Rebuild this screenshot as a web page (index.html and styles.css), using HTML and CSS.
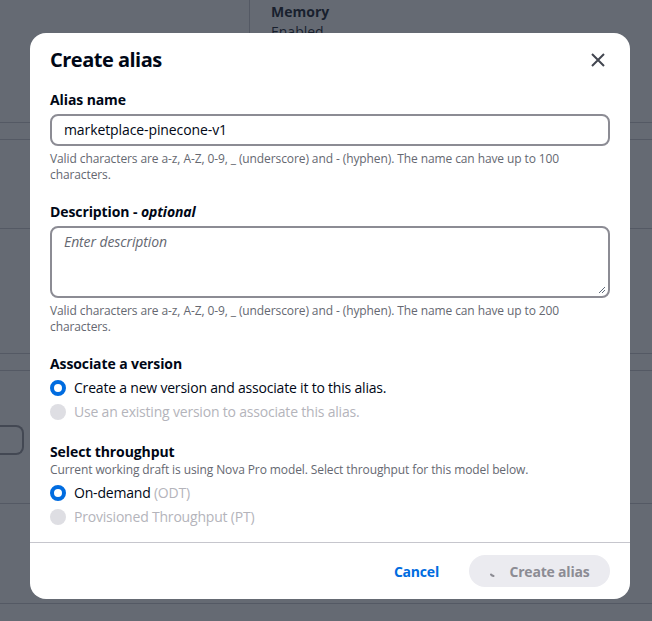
FILE: index.html
```html
<!DOCTYPE html>
<html>
<head>
<meta charset="utf-8">
<link rel="stylesheet" href="styles.css">
</head>
<body>
<div class="page">
  <div class="top">
    <div class="top-left"></div>
    <div class="top-right">
      <div class="kv-key">Memory</div>
      <div class="kv-val">Enabled</div>
    </div>
  </div>
  <div class="row h17"></div>
  <div class="row h89"></div>
  <div class="row h125"></div>
  <div class="row h17"></div>
  <div class="row h133">
    <div class="ghost-input"></div>
  </div>
  <div class="row h100"></div>
</div>
<div class="overlay"></div>
<div class="modal">
  <div class="modal-header">
    <h2 class="title">Create alias</h2>
    <svg class="close" width="16" height="16" viewBox="0 0 16 16"><path d="M2 2l12 12M14 2L2 14" stroke="#424650" stroke-width="2" fill="none"/></svg>
  </div>
  <div class="modal-body">
    <div class="field">
      <div class="label">Alias name</div>
      <div class="input">marketplace-pinecone-v1</div>
      <div class="help">Valid characters are a-z, A-Z, 0-9, _ (underscore) and - (hyphen). The name can have up to 100 characters.</div>
    </div>
    <div class="field">
      <div class="label">Description - <i>optional</i></div>
      <div class="textarea"><span class="placeholder">Enter description</span>
        <svg class="grip" width="8" height="8" viewBox="0 0 8 8"><path d="M7 1L1 7M7 4L4 7" stroke="#5f6b7a" stroke-width="1" fill="none"/></svg>
      </div>
      <div class="help">Valid characters are a-z, A-Z, 0-9, _ (underscore) and - (hyphen). The name can have up to 200 characters.</div>
    </div>
    <div class="field">
      <div class="label">Associate a version</div>
      <div class="radios">
        <div class="radio"><span class="dot on"></span><span>Create a new version and associate it to this alias.</span></div>
        <div class="radio disabled"><span class="dot off"></span><span>Use an existing version to associate this alias.</span></div>
      </div>
    </div>
    <div class="field last">
      <div class="label tight">Select throughput</div>
      <div class="desc">Current working draft is using Nova Pro model. Select throughput for this model below.</div>
      <div class="radios">
        <div class="radio"><span class="dot on"></span><span>On-demand <span class="muted">(ODT)</span></span></div>
        <div class="radio disabled"><span class="dot off"></span><span>Provisioned Throughput (PT)</span></div>
      </div>
    </div>
  </div>
  <div class="modal-footer">
    <button class="link-btn">Cancel</button>
    <button class="primary-btn"><svg class="spin" width="12" height="12" viewBox="0 0 12 12"><path d="M2 9.5a5 5 0 0 0 2.5 1.5" stroke="#8c8c94" stroke-width="2" fill="none" stroke-linecap="round"/></svg>Create alias</button>
  </div>
</div>
</body>
</html>
```
FILE: styles.css
```css
* { box-sizing: border-box; }
html, body { margin: 0; padding: 0; }
body {
  width: 652px;
  height: 621px;
  overflow: hidden;
  position: relative;
  font-family: "Open Sans", "Noto Sans", sans-serif;
  background: #ffffff;
}
.page { width: 652px; }
.top { display: flex; height: 123px; border-bottom: 1px solid #c6c6cd; }
.top-left { width: 250px; border-right: 1px solid #c6c6cd; }
.top-right { padding: 3px 0 0 21px; }
.kv-key { font-size: 14px; font-weight: 700; color: #000716; line-height: 18px; }
.kv-val { font-size: 14px; color: #000716; line-height: 18px; margin-top: 2px; }
.row { border-bottom: 1px solid #c6c6cd; }
.h17 { height: 17px; }
.h89 { height: 89px; }
.h125 { height: 125px; }
.h133 { height: 133px; padding-top: 54px; }
.h100 { height: 100px; }
.ghost-input { width: 24px; height: 30px; border: 2px solid #8c8c94; border-left: none; border-radius: 0 8px 8px 0; }
.overlay { position: absolute; inset: 0; background: rgba(35, 43, 55, 0.7); }
.modal {
  position: absolute;
  left: 30px;
  top: 33px;
  width: 600px;
  height: 566px;
  background: #fff;
  border-radius: 16px;
  display: flex;
  flex-direction: column;
  color: #000716;
}
.modal-header { display: flex; justify-content: space-between; align-items: center; padding: 0 24px 0 20px; height: 54px; margin-bottom: 1px; }
.title { margin: 0; font-size: 20px; font-weight: 700; line-height: 24px; letter-spacing: -0.5px; }
.close { display: block; }
.modal-body { padding: 3px 20px 0; flex: 1; display: flex; flex-direction: column; gap: 20px; }
.field.last { margin-top: 1px; }
.label { font-size: 14px; font-weight: 700; line-height: 18px; margin-bottom: 5px; letter-spacing: -0.1px; }
.label.tight { margin-bottom: 1px; }
.label i { font-weight: 700; }
.input {
  height: 32px;
  border: 2px solid #8c8c94;
  border-radius: 8px;
  padding: 0 12px;
  font-size: 14px;
  line-height: 28px;
  letter-spacing: -0.1px;
}
.textarea {
  position: relative;
  height: 72px;
  border: 2px solid #8c8c94;
  border-radius: 8px;
  padding: 5px 12px;
  font-size: 14px;
  line-height: 18px;
}
.placeholder { color: #656871; font-style: italic; letter-spacing: -0.1px; }
.grip { position: absolute; right: 2px; bottom: 2px; }
.help { font-size: 12px; line-height: 16px; color: #656871; margin-top: 5px; letter-spacing: -0.1px; }
.desc { font-size: 12px; line-height: 16px; color: #656871; margin-bottom: 5px; letter-spacing: -0.1px; }
.radios { display: flex; flex-direction: column; gap: 4px; }
.radio { display: flex; align-items: center; gap: 8px; font-size: 14px; line-height: 20px; letter-spacing: -0.2px; }
.radio.disabled { color: #b4b4bb; }
.muted { color: #b4b4bb; }
.dot { width: 16px; height: 16px; border-radius: 50%; flex: none; }
.dot.on { border: 4.5px solid #006ce0; background: #fff; }
.dot.off { background: #dedee3; }
.modal-footer {
  flex: none;
  border-top: 1px solid #c6c6cd;
  height: 57px;
  display: flex;
  justify-content: flex-end;
  align-items: flex-start;
  padding: 12px 20px 0 0;
  gap: 10px;
}
button { font-family: inherit; font-size: 14px; font-weight: 700; border: none; cursor: pointer; white-space: nowrap; letter-spacing: -0.2px; }
.link-btn { background: none; color: #006ce0; height: 32px; padding: 0 20px; }
.primary-btn {
  background: #ebebf0;
  color: #8c8c94;
  height: 32px;
  width: 141px;
  border-radius: 16px;
  display: flex;
  align-items: center;
  justify-content: center;
  gap: 8px;
  padding: 0 16px 0 16px;
}
.spin { display: block; }
```
